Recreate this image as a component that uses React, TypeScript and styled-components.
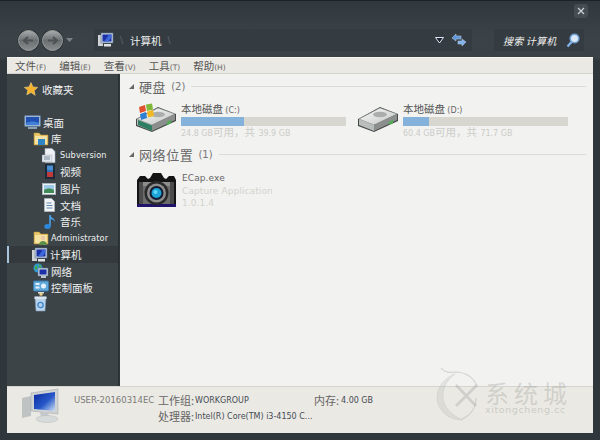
import React from 'react';
import styled, { createGlobalStyle } from 'styled-components';

const FONT = `"DejaVu Sans", "Noto Sans CJK SC", sans-serif`;

const Global = createGlobalStyle`
  html, body { margin: 0; padding: 0; background: #2f363c; }
  * { box-sizing: border-box; }
`;

const Win = styled.div`
  position: relative; width: 600px; height: 440px; overflow: hidden;
  display: flex; flex-direction: column; padding: 1px 7px 7px 7px;
  background: linear-gradient(#30373d, #3b4349 35px, #3a4248 57px, #2f363c 60px);
  border-top: 1px solid #1e2226;
  font-family: ${FONT};
`;
const Header = styled.div`height: 55px; display: flex; flex-direction: column; flex: none;`;
const TitleRow = styled.div`height: 26px; display: flex; justify-content: flex-end; align-items: flex-start; padding: 2px 5px 0 0;`;
const CloseBtn = styled.div`
  width: 14px; height: 14px; border-radius: 3px; background: #454d53;
  display: flex; align-items: center; justify-content: center;
`;
const NavRow = styled.div`height: 22px; display: flex; align-items: center; padding-left: 10px; margin-top: 1px;`;
const NavBtns = styled.div`width: 77px; flex: none; display: flex; align-items: center;`;
const AddressBar = styled.div`
  width: 378px; height: 22px; flex: none; background: #353c41; display: flex; align-items: center; padding-left: 4px;
`;
const Crumb = styled.span`color: #eef0f0; font-size: 10.5px; margin-left: 7px; font-family: "Noto Sans CJK SC", sans-serif;`;
const Sep = styled.span`color: #59626a; font-size: 11px; margin-left: 6px; font-family: "Liberation Sans", sans-serif;`;
const Spring = styled.div`flex: 1;`;
const SearchBox = styled.div`
  width: 90px; height: 22px; flex: none; margin-left: 22px; background: #353c41; display: flex; align-items: center;
  justify-content: space-between; padding: 0 4px 0 9px;
`;
const SearchText = styled.span`color: #f0f0f0; font-size: 10px; font-style: italic; letter-spacing: 0.2px; font-family: "Noto Sans CJK SC", sans-serif;`;

const Menu = styled.div`
  height: 17px; flex: none; background: #ebe9e3; border-top: 1px solid #f6f5f0; border-bottom: 1px solid #d5d4cc;
  display: flex; align-items: center; padding: 0 0 1px 8px; gap: 13px; width: 586px;
`;
const MenuItem = styled.span`color: #555; font-size: 10.5px; font-family: "Noto Sans CJK SC", sans-serif; white-space: nowrap;`;
const MenuKey = styled.span`font-size: 7.5px; color: #666; font-family: ${FONT};`;

const Body = styled.div`flex: 1; display: flex; min-height: 0; width: 586px;`;
const Side = styled.div`
  width: 112px; flex: none; background: #3d4448; padding-top: 7px; position: relative; border-right: 1px solid #2a2f33;
`;
const TreeRow = styled.div<{ $indent: number; $selected?: boolean; $top?: number }>`
  height: 16.55px; display: flex; align-items: center; white-space: nowrap;
  padding-left: ${p => p.$indent}px; margin-top: ${p => p.$top ?? 0}px;
  background: ${p => (p.$selected ? '#33393d' : 'transparent')};
  border-left: ${p => (p.$selected ? '2px solid #a9c4dd' : '2px solid transparent')};
`;
const IconSlot = styled.span<{ $w: number }>`width: ${p => p.$w}px; flex: none; display: flex; align-items: center;`;
const TreeText = styled.span<{ $small?: boolean }>`
  color: #eef0f0; font-size: ${p => (p.$small ? '8.2px' : '10.5px')}; letter-spacing: ${p => (p.$small ? '0.1px' : '0')};
  font-family: ${p => (p.$small ? FONT : `"Noto Sans CJK SC", sans-serif`)};
`;

const Main = styled.div`flex: 1; background: #f2f2f0; padding: 4px 7px 0 9px; margin-left: 1px;`;
const Group = styled.div`height: 16px; display: flex; align-items: center;`;
const Tri = styled.span`
  width: 0; height: 0; border-style: solid; border-width: 0 0 5px 5px; border-color: transparent transparent #666 transparent; flex: none; margin-right: 5px;
`;
const GroupTitle = styled.span`color: #666; font-size: 13px; letter-spacing: 0.6px; font-family: "Noto Sans CJK SC", sans-serif;`;
const GroupCount = styled.span`color: #777; font-size: 10px; margin-left: 5px;`;
const GroupLine = styled.div`flex: 1; height: 1px; background: #dcdcd6; margin-left: 6px;`;
const Drives = styled.div`display: flex; height: 52px; padding-top: 8px;`;
const Drive = styled.div`width: 222px; display: flex; flex: none;`;
const DriveIcon = styled.div`width: 52px; padding: 0 0 0 7px; flex: none;`;
const DriveInfo = styled.div`width: 165px; flex: none;`;
const DriveName = styled.div`height: 15px; color: #555; font-size: 10.5px; line-height: 13px; white-space: nowrap; font-family: "Noto Sans CJK SC", sans-serif;`;
const DriveLetter = styled.span`font-size: 8px; font-family: ${FONT}; color: #666;`;
const Bar = styled.div`height: 9px; background: #d8d7cf;`;
const Fill = styled.div`height: 100%; background: #84b2da;`;
const DriveSub = styled.div`color: #ccccc8; font-size: 10.5px; line-height: 13px; white-space: nowrap; font-family: ${FONT};`;
const SubSmall = styled.span`font-size: 8px;`;
const App1 = styled.div`display: flex; padding: 10px 0 0 7px;`;
const AppIcon = styled.div`width: 46px; flex: none;`;
const AppLine = styled.div<{ $dark?: boolean }>`
  height: 12.5px; line-height: 12.5px; font-size: 9px; letter-spacing: 0.1px; color: ${p => (p.$dark ? '#666' : '#d2d2ce')};
`;

const Details = styled.div`
  height: 47px; flex: none; width: 586px; background: #ebe9e3; border-top: 1px solid #d5d5cd;
  display: grid; grid-template-columns: 67px 84px 37px 119px 27px 1fr; grid-template-rows: 16px 16px; padding-top: 5px; align-items: center;
`;
const DetailIcon = styled.div`grid-row: 1 / 3; padding: 0 0 0 15px;`;
const HostName = styled.div`color: #7a7a78; font-size: 8.5px; white-space: nowrap;`;
const Label = styled.div`color: #666; font-size: 11px; white-space: nowrap; font-family: "Noto Sans CJK SC", sans-serif;`;
const Value = styled.div`color: #444c55; font-size: 8px; white-space: nowrap;`;
const Cpu = styled(Value)`grid-column: 4 / 7;`;

const Mark = styled.div`
  position: absolute; left: 435px; top: 365px; width: 145px; height: 62px; pointer-events: none;
`;
const MarkCn = styled.div`
  position: absolute; left: 50px; top: 16px; font-size: 24px; line-height: 22px; letter-spacing: 5px; color: rgba(170,172,170,.42);
  font-family: "Noto Sans CJK SC", sans-serif; white-space: nowrap;
`;
const MarkEn = styled.div`
  position: absolute; left: 50px; top: 38px; font-size: 9.5px; line-height: 11px; letter-spacing: 0.6px; color: rgba(170,172,170,.5); white-space: nowrap;
`;

const Round = ({ dir }: { dir: 'l' | 'r' }) => (
  <svg width="23" height="23" viewBox="0 0 23 23" style={{ marginLeft: dir === 'r' ? 1 : 0 }}>
    <defs>
      <linearGradient id={`rb${dir}`} x1="0" y1="0" x2="0" y2="1">
        <stop offset="0" stopColor="#a9acac" /><stop offset=".5" stopColor="#6a6f71" /><stop offset="1" stopColor="#8a8d8d" />
      </linearGradient>
    </defs>
    <circle cx="11.5" cy="11.5" r="11" fill="#23282c" />
    <circle cx="11.5" cy="11.5" r="10" fill={`url(#rb${dir})`} stroke="#9a9d9d" />
    <path d={dir === 'l' ? 'M16 11.5H8M11 8l-4 3.5 4 3.5' : 'M7 11.5h8M12 8l4 3.5-4 3.5'} stroke="#4d5255" strokeWidth="2.2" fill="none" />
  </svg>
);

const Pc = ({ s = 16 }: { s?: number }) => (
  <svg width={s} height={s} viewBox="0 0 16 16">
    <rect x="0" y="3" width="5" height="11" fill="#cfd3d6" />
    <rect x="3" y="1" width="12" height="10" fill="#c8d2dc" stroke="#56708c" strokeWidth=".6" />
    <rect x="4.5" y="2.5" width="9" height="7" fill="#1a2fa8" />
    <path d="M6 9.5l5-7h2.5v3l-3 4z" fill="#3e68d8" />
    <rect x="6" y="12" width="7" height="2.5" fill="#dfe3e6" />
  </svg>
);

const Desktop = () => (
  <svg width="17" height="14" viewBox="0 0 17 14">
    <rect x=".5" y=".5" width="16" height="11" rx="1" fill="#9fb4cf" stroke="#5d7692" />
    <rect x="2" y="2" width="13" height="8" fill="#1f4fb0" />
    <path d="M2 8c4-2 9-2 13 0v2H2z" fill="#3f7fd8" />
    <rect x="4" y="12" width="9" height="2" fill="#88a0b8" />
  </svg>
);

const Folder = ({ badge }: { badge: 'lib' | 'user' }) => (
  <svg width="16" height="16" viewBox="0 0 16 16">
    <path d="M1 2h5l2 2h7v10H1z" fill="#e9c766" stroke="#b6923d" strokeWidth=".5" />
    <rect x="2" y="5" width="12" height="8" fill="#f4e3a2" />
    {badge === 'lib'
      ? <path d="M5 8h7v6H5z M6 10h5" fill="#2f86c5" />
      : <g><circle cx="10" cy="8" r="2.2" fill="#e9c9a5" /><path d="M6 15c0-3 2-4 4-4s4 1 4 4z" fill="#5d8f4a" /></g>}
  </svg>
);

const DocIcon = () => (
  <svg width="14" height="15" viewBox="0 0 14 15">
    <path d="M3 .5h7l3 3v11H3z" fill="#eef2f6" stroke="#aab4c0" strokeWidth=".6" />
    <rect x="0" y="7" width="10" height="7" fill="#dfe5eb" stroke="#a0aab5" strokeWidth=".5" />
    <path d="M2 9h6M2 11h6" stroke="#7f8c9a" />
  </svg>
);
const VideoIcon = () => (
  <svg width="10" height="15" viewBox="0 0 10 15">
    <rect width="10" height="15" fill="#1c2a3a" />
    <rect x="2" y="1.5" width="6" height="5" fill="#4a8fd0" />
    <rect x="2" y="8" width="6" height="5" fill="#c03a3a" />
    <path d="M2 6h6v2H2z" fill="#2f71b5" />
  </svg>
);
const PicIcon = () => (
  <svg width="14" height="12" viewBox="0 0 14 12">
    <rect x=".5" y=".5" width="13" height="11" fill="#eef1f3" stroke="#aab3bb" />
    <rect x="2" y="2" width="10" height="8" fill="#9ec8e8" />
    <path d="M2 7c3-2 7-2 10 0v3H2z" fill="#3f8a55" />
  </svg>
);
const PageIcon = () => (
  <svg width="11" height="14" viewBox="0 0 11 14">
    <path d="M.5.5h7l3 3v10H.5z" fill="#f2f4f6" stroke="#aab3bb" />
    <path d="M2.5 5h5M2.5 7.5h6M2.5 10h6" stroke="#5e86ad" />
  </svg>
);
const MusicIcon = () => (
  <svg width="12" height="16" viewBox="0 0 12 16">
    <path d="M6 1v11" stroke="#4aa3ea" strokeWidth="1.6" />
    <ellipse cx="3.5" cy="12.5" rx="3.2" ry="2.5" fill="#2d87dc" />
    <path d="M6 1c1 3 5 3 5 7-1-2-3-3-5-3z" fill="#4aa3ea" />
  </svg>
);
const NetIcon = () => (
  <svg width="16" height="16" viewBox="0 0 16 16">
    <circle cx="5" cy="5" r="4.5" fill="#2d9bd8" />
    <path d="M2 3c2-1 3 1 2 3S1 6 2 3zM6 1c2 1 3 3 2 4S5 3 6 1z" fill="#47a84a" />
    <rect x="5" y="5" width="10" height="8" fill="#c8d2dc" stroke="#506a84" strokeWidth=".5" />
    <rect x="6.5" y="6.5" width="7" height="5" fill="#1a2fa8" />
    <rect x="8" y="13" width="5" height="2" fill="#bcc6d0" />
  </svg>
);
const PanelIcon = () => (
  <svg width="16" height="16" viewBox="0 0 16 16">
    <rect x=".5" y="1" width="15" height="10" rx="1" fill="#5fa9dc" stroke="#3c7bab" />
    <rect x="2.5" y="3" width="4" height="2" fill="#e6f2fb" />
    <rect x="2.5" y="6.5" width="4" height="2" fill="#e6f2fb" />
    <circle cx="10.5" cy="6" r="2.5" fill="#e6f2fb" />
    <path d="M5 12h6v1.5H5z" fill="#d5dce2" />
    <circle cx="8" cy="14.2" r="1.6" fill="#ecd28a" />
  </svg>
);
const BinIcon = () => (
  <svg width="13" height="16" viewBox="0 0 13 16">
    <path d="M1 1h11l-1 14H2z" fill="#b9d3ea" stroke="#7b9cbc" strokeWidth=".6" />
    <circle cx="6.5" cy="9" r="2.6" fill="none" stroke="#3a85d0" strokeWidth="1.3" />
    <rect x=".5" y=".5" width="12" height="2.5" fill="#d8e4ee" />
  </svg>
);
const Star = () => (
  <svg width="14" height="14" viewBox="0 0 14 14">
    <path d="M7 .5l2 4.4 4.7.5-3.5 3.2 1 4.7L7 10.5l-4.2 2.3 1-4.7L.3 5.4 5 4.9z" fill="#f6b22d" stroke="#fbe08a" strokeWidth=".5" />
  </svg>
);

const Hdd = ({ win }: { win?: boolean }) => (
  <svg width="41" height="34" viewBox="0 0 41 34" style={{ marginTop: -3 }}>
    <defs>
      <linearGradient id={win ? 'hw' : 'hp'} x1="0" y1="0" x2="1" y2="1">
        <stop offset="0" stopColor="#fbfbfb" /><stop offset=".6" stopColor="#d9dbda" /><stop offset="1" stopColor="#b5b8b7" />
      </linearGradient>
    </defs>
    <path d="M0 20L22 8l18 7v7L16 33 0 27z" fill="#454a49" />
    <path d="M1 20L22 9l17 6-23 11z" fill={`url(#${win ? 'hw' : 'hp'})`} stroke="#8b908f" strokeWidth=".5" />
    <ellipse cx="22" cy="15.5" rx="7" ry="2.8" fill="#a9adac" />
    <path d="M1 20l15 6v6L1 26z" fill="#b9bdbc" />
    <path d="M16 26l23-11v6L16 32z" fill="#8a8f8e" />
    <path d="M31 23l4-2v3l-4 2z" fill="#4cb050" />
    {win && (
      <g>
        <path d="M2 21l14 5.500v5.500L2 26z" fill="#2f7d62" />
        <path d="M3 8l6-2 1 6-6 2z" fill="#e2512f" />
        <path d="M10 5.500l6-1 1 6-6 1.500z" fill="#7fb83a" />
        <path d="M4 15l6-2 1 6-6 2z" fill="#2f7fd0" />
        <path d="M11 12.500l6-1.500 1 6-6 1.500z" fill="#f2b824" />
      </g>
    )}
  </svg>
);

const Camera = () => (
  <svg width="41" height="35" viewBox="0 0 41 35">
    <path d="M1 8l3-4h5l3 3 2-1 3-5h8l3 5 2 1 3-3h5l2 4v26H1z" fill="#141414" />
    <rect x="3" y="10" width="35" height="22" fill="#6c6c6c" />
    <rect x="3" y="10" width="35" height="4" fill="#8d8d8d" />
    <rect x="3" y="10" width="4" height="22" fill="#4b4b4b" />
    <rect x="34" y="10" width="4" height="22" fill="#4b4b4b" />
    <rect x="1" y="32" width="39" height="3" fill="#20146a" />
    <circle cx="20.5" cy="21" r="12" fill="#2a2a2a" />
    <circle cx="20.5" cy="21" r="9.500" fill="#8d8d8d" />
    <circle cx="20.5" cy="21" r="7" fill="#121a30" />
    <circle cx="20.5" cy="21" r="5" fill="#1ca3d8" />
    <circle cx="19.500" cy="20" r="2" fill="#5fd8f5" />
  </svg>
);

const BigPc = () => (
  <svg width="40" height="36" viewBox="0 0 40 36">
    <defs>
      <linearGradient id="sc" x1="0" y1="0" x2="1" y2="1">
        <stop offset="0" stopColor="#0d2a9f" /><stop offset=".55" stopColor="#2657c8" /><stop offset="1" stopColor="#cfe0f4" />
      </linearGradient>
    </defs>
    <path d="M0 10l9-2v20l-9 2z" fill="#c0c3c4" />
    <path d="M9 5l27-4v25L9 23z" fill="#cfd3d5" stroke="#9aa0a3" strokeWidth=".5" />
    <path d="M12 7l21-3v19L12 21z" fill="url(#sc)" />
    <path d="M18 24h8l1 5h-8z" fill="#c4c8ca" />
    <ellipse cx="25" cy="31" rx="11" ry="3.500" fill="#d7dadb" stroke="#b8bcbe" strokeWidth=".5" />
  </svg>
);

const Swirl = () => (
  <svg width="50" height="56" viewBox="0 0 50 56" style={{ position: 'absolute', left: 0, top: 2 }}>
    <g fill="none" stroke="rgba(170,172,170,.42)">
      <path d="M6 0c4 5 9 5 14 4 10 0 18 5 22 14" strokeWidth="1.2" />
      <path d="M20 6C6 11-2 26 4 38c4 9 13 14 24 14C18 48 8 40 8 28 8 19 12 12 20 6z" fill="rgba(170,172,170,.22)" strokeWidth=".5" />
      <path d="M21 17l20 21M42 17L21 38" strokeWidth="2.6" />
      <path d="M41 30c0 9-5 17-14 21" strokeWidth="1.2" />
    </g>
  </svg>
);

const drives = [
  { name: '本地磁盘', letter: '(C:)', pct: 38, free: '24.8 GB', total: '39.9 GB', win: true },
  { name: '本地磁盘', letter: '(D:)', pct: 16, free: '60.4 GB', total: '71.7 GB', win: false },
];

const menus: [string, string][] = [['文件', '(F)'], ['编辑', '(E)'], ['查看', '(V)'], ['工具', '(T)'], ['帮助', '(H)']];

export default function App() {
  return (
    <Win>
      <Global />
      <Header>
        <TitleRow>
          <CloseBtn>
            <svg width="8" height="8" viewBox="0 0 8 8"><path d="M1 1l6 6M7 1L1 7" stroke="#cdd2d5" strokeWidth="1.2" /></svg>
          </CloseBtn>
        </TitleRow>
        <NavRow>
          <NavBtns>
            <Round dir="l" /><Round dir="r" />
            <svg width="8" height="5" viewBox="0 0 8 5" style={{ marginLeft: 2 }}><path d="M0 0h7L3.500 4z" fill="#7b8287" /></svg>
          </NavBtns>
          <AddressBar>
            <Pc />
            <Sep>\</Sep>
            <Crumb>计算机</Crumb>
            <Sep>\</Sep>
            <Spring />
            <svg width="9" height="7" viewBox="0 0 9 7" style={{ marginRight: 7 }}><path d="M.5.500h8L4.500 6z" fill="#1c2530" stroke="#dfe8f2" /></svg>
            <svg width="16" height="14" viewBox="0 0 16 14" style={{ marginRight: 5 }}>
              <path d="M1 5l4-4v2h5v3H5v2z" fill="#5f95d8" stroke="#bcd4ee" strokeWidth=".5" />
              <path d="M15 9l-4 4v-2H7V8h4V6z" fill="#7fb2ea" stroke="#bcd4ee" strokeWidth=".5" />
            </svg>
          </AddressBar>
          <SearchBox>
            <SearchText>搜索 计算机</SearchText>
            <svg width="14" height="15" viewBox="0 0 14 15">
              <circle cx="8.500" cy="5.500" r="4.300" fill="#dbe9f7" stroke="#6f9fd8" strokeWidth="1.6" />
              <path d="M5.500 9L1.500 13.500" stroke="#7fb0e8" strokeWidth="2.400" />
            </svg>
          </SearchBox>
        </NavRow>
      </Header>
      <Menu>
        {menus.map(([a, b]) => (
          <MenuItem key={a}>{a}<MenuKey>{b}</MenuKey></MenuItem>
        ))}
      </Menu>
      <Body>
        <Side>
          <TreeRow $indent={15}><IconSlot $w={18}><Star /></IconSlot><TreeText>收藏夹</TreeText></TreeRow>
          <TreeRow $indent={15} $top={16.500}><IconSlot $w={19}><Desktop /></IconSlot><TreeText>桌面</TreeText></TreeRow>
          <TreeRow $indent={24}><IconSlot $w={18}><Folder badge="lib" /></IconSlot><TreeText>库</TreeText></TreeRow>
          <TreeRow $indent={33}><IconSlot $w={18}><DocIcon /></IconSlot><TreeText $small>Subversion</TreeText></TreeRow>
          <TreeRow $indent={36}><IconSlot $w={15}><VideoIcon /></IconSlot><TreeText>视频</TreeText></TreeRow>
          <TreeRow $indent={33}><IconSlot $w={18}><PicIcon /></IconSlot><TreeText>图片</TreeText></TreeRow>
          <TreeRow $indent={35}><IconSlot $w={16}><PageIcon /></IconSlot><TreeText>文档</TreeText></TreeRow>
          <TreeRow $indent={35}><IconSlot $w={16}><MusicIcon /></IconSlot><TreeText>音乐</TreeText></TreeRow>
          <TreeRow $indent={24}><IconSlot $w={18}><Folder badge="user" /></IconSlot><TreeText $small>Administrator</TreeText></TreeRow>
          <TreeRow $indent={23} $selected><IconSlot $w={18}><Pc /></IconSlot><TreeText>计算机</TreeText></TreeRow>
          <TreeRow $indent={24}><IconSlot $w={18}><NetIcon /></IconSlot><TreeText>网络</TreeText></TreeRow>
          <TreeRow $indent={24}><IconSlot $w={18}><PanelIcon /></IconSlot><TreeText>控制面板</TreeText></TreeRow>
          <TreeRow $indent={25}><IconSlot $w={14}><BinIcon /></IconSlot></TreeRow>
        </Side>
        <Main>
          <Group><Tri /><GroupTitle>硬盘</GroupTitle><GroupCount>(2)</GroupCount><GroupLine /></Group>
          <Drives>
            {drives.map(d => (
              <Drive key={d.letter}>
                <DriveIcon><Hdd win={d.win} /></DriveIcon>
                <DriveInfo>
                  <DriveName>{d.name} <DriveLetter>{d.letter}</DriveLetter></DriveName>
                  <Bar><Fill style={{ width: `${d.pct}%` }} /></Bar>
                  <DriveSub><SubSmall>{d.free}</SubSmall>可用，共 <SubSmall>{d.total}</SubSmall></DriveSub>
                </DriveInfo>
              </Drive>
            ))}
          </Drives>
          <Group><Tri /><GroupTitle>网络位置</GroupTitle><GroupCount>(1)</GroupCount><GroupLine /></Group>
          <App1>
            <AppIcon><Camera /></AppIcon>
            <div>
              <AppLine $dark>ECap.exe</AppLine>
              <AppLine>Capture Application</AppLine>
              <AppLine>1.0.1.4</AppLine>
            </div>
          </App1>
        </Main>
      </Body>
      <Details>
        <DetailIcon><BigPc /></DetailIcon>
        <HostName>USER-20160314EC</HostName>
        <Label>工作组:</Label>
        <Value>WORKGROUP</Value>
        <Label>内存:</Label>
        <Value>4.00 GB</Value>
        <div />
        <Label>处理器:</Label>
        <Cpu>Intel(R) Core(TM) i3-4150 C...</Cpu>
      </Details>
      <Mark>
        <Swirl />
        <MarkCn>系统城</MarkCn>
        <MarkEn>xitongcheng.cc</MarkEn>
      </Mark>
    </Win>
  );
}
